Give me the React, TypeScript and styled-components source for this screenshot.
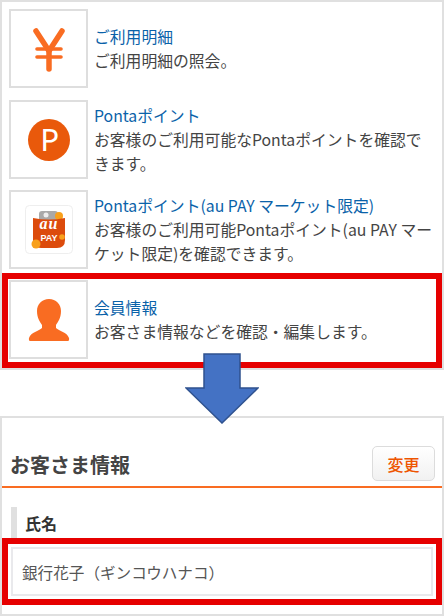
import React from 'react';
import styled, { createGlobalStyle } from 'styled-components';

const GlobalStyle = createGlobalStyle`
  html, body {
    margin: 0;
    padding: 0;
    background: #fff;
  }
  body {
    font-family: "Noto Sans CJK JP", "Noto Sans", sans-serif;
    font-size: 15.8px;
    line-height: 24px;
    color: #444;
  }
`;

const YenIcon = () => (
  <svg width="75" height="75" viewBox="2 2 75 75" fill="none" stroke="#f96c22" strokeLinecap="round" strokeLinejoin="round">
    <path d="M27 22 L40 42 L53 22" strokeWidth="5.5" />
    <path d="M40 42 V60" strokeWidth="5.5" />
    <path d="M28 40 H52 M28 48 H52" strokeWidth="3.6" />
  </svg>
);

const PontaIcon = () => (
  <svg width="75" height="75" viewBox="2 2 75 75">
    <circle cx="40" cy="40" r="21" fill="#e9590b" />
    <text x="40.5" y="51" textAnchor="middle" fontFamily="Lato, sans-serif" fontSize="30" fill="#fff">P</text>
  </svg>
);

const AuPayIcon = () => (
  <svg width="75" height="75" viewBox="2 2 75 75">
    <rect x="16.5" y="15.5" width="47" height="48" rx="4" fill="#fff" stroke="#eeeeee" />
    <rect x="30" y="21" width="19" height="12" rx="3" fill="#a9a9a9" />
    <circle cx="37" cy="25" r="2.5" fill="#eee" />
    <circle cx="50" cy="26" r="4" fill="#f8a01c" />
    <path d="M24 28 Q40 31 56 28 L56 50 Q56 58 48 58 L32 58 Q24 58 24 50 Z" fill="#dc4b0c" />
    <text x="40" y="38.5" textAnchor="middle" fontFamily="Liberation Serif, serif" fontStyle="italic" fontWeight="700" fontSize="16" letterSpacing="1" fill="#fff">au</text>
    <text x="40" y="51" textAnchor="middle" fontFamily="Liberation Sans, sans-serif" fontWeight="700" fontSize="9" fill="#fff">PAY</text>
    <circle cx="27" cy="54" r="4.5" fill="#f8a01c" />
    <circle cx="53" cy="47" r="2.8" fill="#f8a01c" />
  </svg>
);

const PersonIcon = () => (
  <svg width="75" height="75" viewBox="2 2 75 75">
    <path
      d="M40 19c7 0 12 5 12 12 0 7-3 11-5 14v3c3 3 11 4 13 10 .3 1 0 3-1 3H21c-1 0-1.3-2-1-3 2-6 10-7 13-10v-3c-2-3-5-7-5-14 0-7 5-12 12-12z"
      fill="#f96c22"
    />
  </svg>
);

const menuItems = [
  {
    icon: <YenIcon />,
    title: 'ご利用明細',
    text: 'ご利用明細の照会。',
  },
  {
    icon: <PontaIcon />,
    title: 'Pontaポイント',
    text: 'お客様のご利用可能なPontaポイントを確認できます。',
  },
  {
    icon: <AuPayIcon />,
    title: 'Pontaポイント(au PAY マーケット限定)',
    text: 'お客様のご利用可能Pontaポイント(au PAY マーケット限定)を確認できます。',
  },
  {
    icon: <PersonIcon />,
    title: '会員情報',
    text: 'お客さま情報などを確認・編集します。',
    active: true,
  },
];

const App = () => {
  return (
    <Page>
      <GlobalStyle />
      <MenuPanel>
        {menuItems.map((item) => (
          <MenuRow key={item.title} $active={item.active}>
            <IconBox>{item.icon}</IconBox>
            <MenuText>
              <MenuTitle>{item.title}</MenuTitle>
              <MenuDesc>{item.text}</MenuDesc>
            </MenuText>
          </MenuRow>
        ))}
      </MenuPanel>
      <ArrowGap>
        <DownArrow width="74" height="71" viewBox="0 0 74 71">
          <path
            d="M19 1 H55 V35 H73 L37 70 L1 35 H19 Z"
            fill="#4472c4"
            stroke="#2f528f"
            strokeWidth="1.5"
          />
        </DownArrow>
      </ArrowGap>
      <InfoPanel>
        <InfoHeader>
          <InfoTitle>お客さま情報</InfoTitle>
          <ChangeButton>変更</ChangeButton>
        </InfoHeader>
        <FieldLabel>氏名</FieldLabel>
        <FieldHighlight>
          <FieldValue>銀行花子（ギンコウハナコ）</FieldValue>
        </FieldHighlight>
      </InfoPanel>
    </Page>
  );
};

export default App;

const Page = styled.div`
  width: 444px;
  height: 616px;
  overflow: hidden;
  background: #fff;
`;

const MenuPanel = styled.div`
  box-sizing: border-box;
  height: 370px;
  border: 2px solid #e0e0e0;
  padding-top: 7px;
`;

const MenuRow = styled.div<{ $active?: boolean }>`
  display: flex;
  align-items: center;
  gap: 6px;
  min-height: 80px;
  margin-top: ${({ $active }) => ($active ? '3px' : '10.5px')};
  padding: ${({ $active }) => ($active ? '1px 0 2px 1px' : '0 0 0 7px')};
  border: ${({ $active }) => ($active ? '6px solid #e60000' : 'none')};

  &:first-child {
    margin-top: 0;
  }
`;

const IconBox = styled.div`
  flex: none;
  align-self: flex-start;
  display: flex;
  width: 75px;
  height: 75px;
  border: 2px solid #dedede;
`;

const MenuText = styled.div`
  min-width: 0;
  padding-right: 6px;
`;

const MenuTitle = styled.a`
  display: block;
  color: #0a62a9;
`;

const MenuDesc = styled.p`
  margin: 0;
`;

const ArrowGap = styled.div`
  position: relative;
  height: 46px;
`;

const DownArrow = styled.svg`
  position: absolute;
  top: -17px;
  left: 185px;
  z-index: 1;
`;

const InfoPanel = styled.div`
  box-sizing: border-box;
  height: 200px;
  border: 2px solid #e0e0e0;
`;

const InfoHeader = styled.div`
  display: flex;
  align-items: center;
  justify-content: space-between;
  box-sizing: border-box;
  height: 70px;
  padding: 27px 7px 4px 8px;
  border-bottom: 2px solid #f96c22;
`;

const InfoTitle = styled.h2`
  margin: 2px 0 0;
  font-size: 20px;
  font-weight: 700;
  color: #444;
`;

const ChangeButton = styled.button`
  box-sizing: border-box;
  width: 63px;
  height: 35px;
  padding: 0;
  border: 1px solid #dcdcdc;
  border-radius: 5px;
  background: linear-gradient(#fff, #f1f1f1);
  font-family: inherit;
  font-size: 16px;
  font-weight: 500;
  color: #ee5500;
`;

const FieldLabel = styled.div`
  box-sizing: border-box;
  height: 31px;
  margin: 19px 0 0 9px;
  padding: 4px 0 0 8px;
  border-left: 6px solid #e0e0e0;
  font-size: 16px;
  font-weight: 700;
  color: #333;
`;

const FieldHighlight = styled.div`
  padding: 3px;
  border: 6px solid #e60000;
`;

const FieldValue = styled.div`
  box-sizing: border-box;
  height: 49px;
  padding: 11px 9px;
  border: 2px solid #e9e9ec;
  font-size: 15.6px;
  color: #555;
`;
